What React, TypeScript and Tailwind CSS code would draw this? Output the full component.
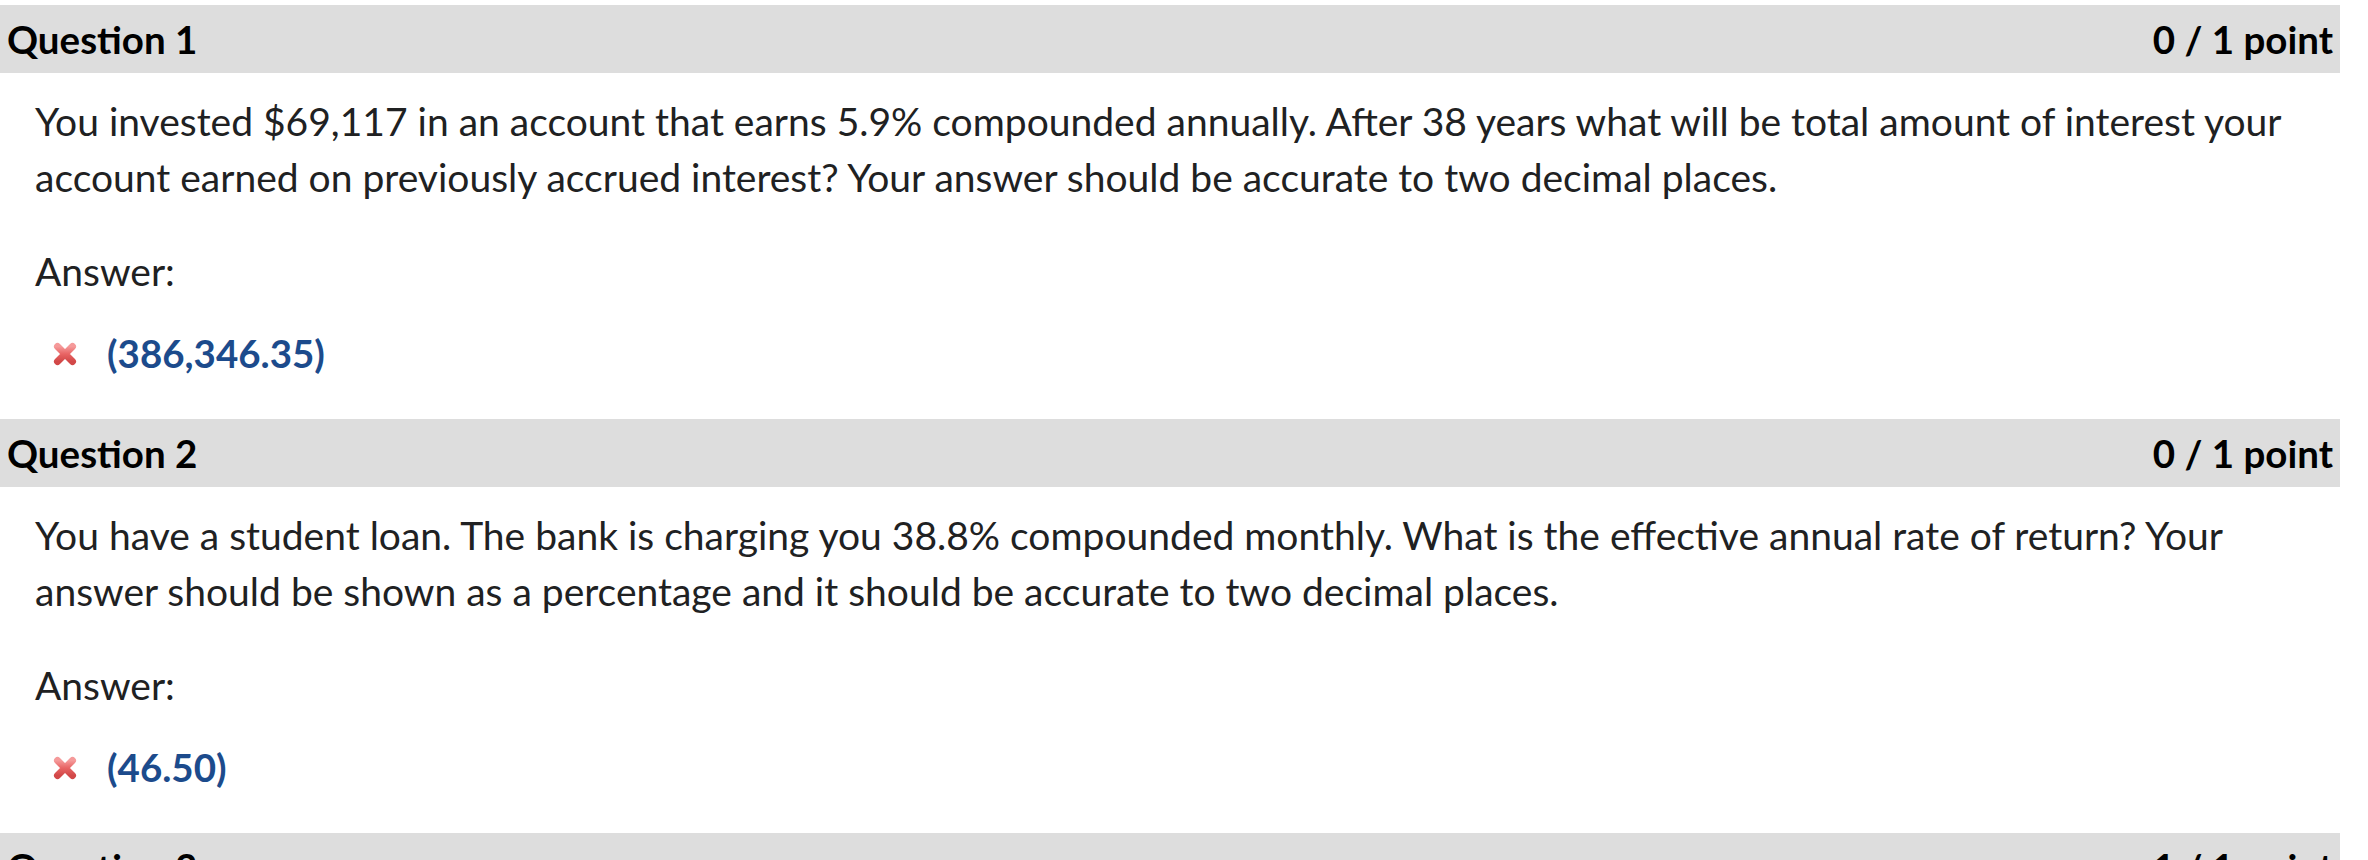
import React from "react";

function RedX() {
  return (
    <svg width="26" height="26" viewBox="0 0 26 26" className="shrink-0">
      <defs>
        <linearGradient id="xg" x1="0" y1="0" x2="0" y2="1">
          <stop offset="0%" stopColor="#f59a9a" />
          <stop offset="50%" stopColor="#e86464" />
          <stop offset="100%" stopColor="#d24848" />
        </linearGradient>
      </defs>
      <path
        d="M5.5 5.5 L20.5 20.5 M20.5 5.5 L5.5 20.5"
        stroke="url(#xg)"
        strokeWidth="7"
        strokeLinecap="round"
        fill="none"
      />
    </svg>
  );
}

type Q = { n: number; score: string; text: string; answer: string };

const questions: Q[] = [
  {
    n: 1,
    score: "0 / 1 point",
    text: "You invested $69,117 in an account that earns 5.9% compounded annually. After 38 years what will be total amount of interest your account earned on previously accrued interest? Your answer should be accurate to two decimal places.",
    answer: "(386,346.35)",
  },
  {
    n: 2,
    score: "0 / 1 point",
    text: "You have a student loan. The bank is charging you 38.8% compounded monthly. What is the effective annual rate of return? Your answer should be shown as a percentage and it should be accurate to two decimal places.",
    answer: "(46.50)",
  },
  {
    n: 3,
    score: "1 / 1 point",
    text: "You deposit money in a savings account. Your answer should be accurate to two decimal places.",
    answer: "(0.00)",
  },
];

export default function App() {
  return (
    <div
      className="w-[2368px] h-[860px] overflow-hidden bg-white pt-[5px]"
      style={{ fontFamily: "Lato, 'Open Sans', sans-serif" }}
    >
      {questions.map((q) => (
        <div key={q.n} className="w-[2340px] pb-[37px]">
          <div className="h-[68px] bg-[#dddddd] flex items-center justify-between pl-[7px] pr-[7px] pt-[2px] text-[38.5px] font-bold text-black">
            <span>Question {q.n}</span>
            <span>{q.score}</span>
          </div>
          <div className="pl-[35px] pr-[50px] text-[39px] text-[#202122]">
            <p className="mt-[20px] leading-[56px]">{q.text}</p>
            <p className="mt-[38px] leading-[56px]">Answer:</p>
            <div className="mt-[27px] h-[56px] flex items-center pl-[17px] gap-[29px]">
              <RedX />
              <span className="font-bold text-[#1c4b8c] text-[38.5px]">{q.answer}</span>
            </div>
          </div>
        </div>
      ))}
    </div>
  );
}
